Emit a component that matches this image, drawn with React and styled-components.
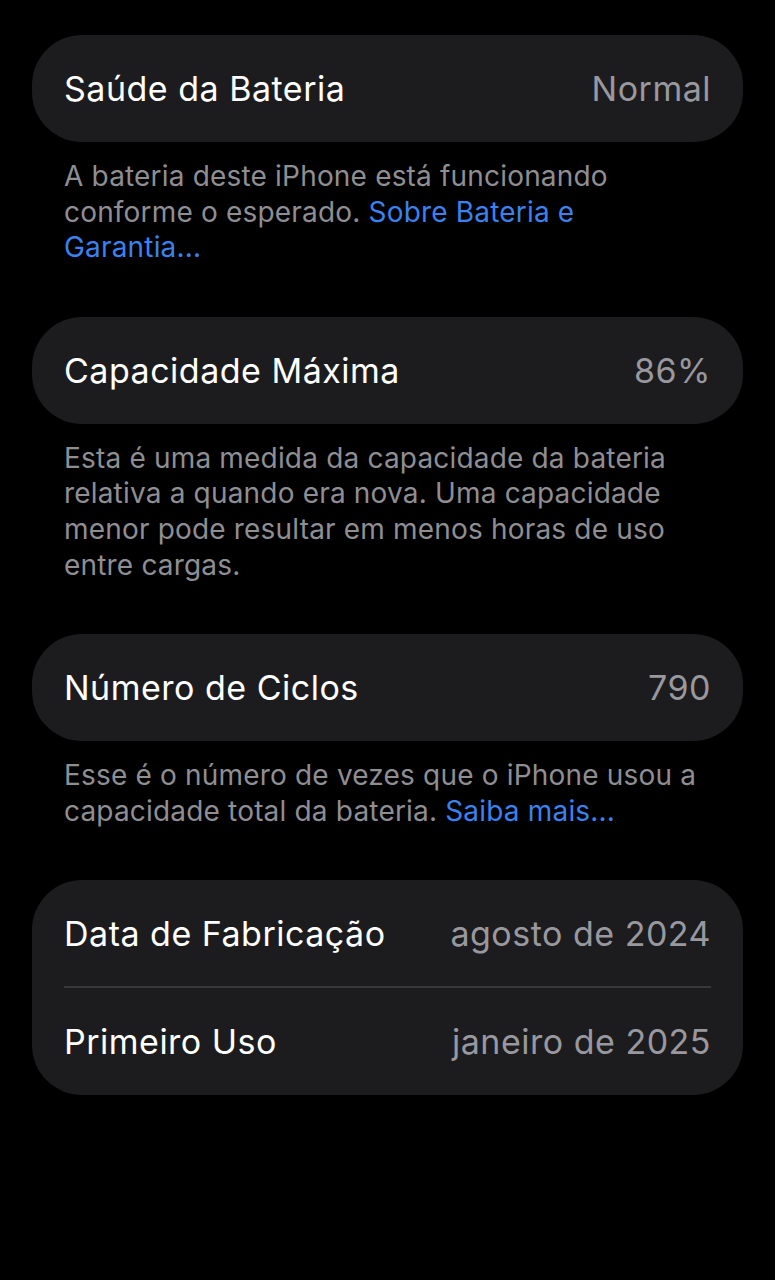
import React from "react";
import styled, { createGlobalStyle } from "styled-components";

const Global = createGlobalStyle`
  html, body { margin: 0; padding: 0; background: #000; }
  body { font-family: Inter, "Noto Sans", "Liberation Sans", sans-serif; -webkit-font-smoothing: antialiased; }
`;

const Page = styled.div`
  background: #000;
  min-height: 1280px;
  padding: 35px 32px 0 32px;
  box-sizing: border-box;
  display: flex;
  flex-direction: column;
`;

const Section = styled.section`
  display: flex;
  flex-direction: column;
  margin-bottom: 51px;
`;

const Card = styled.div`
  background: #1c1c1e;
  border-radius: 50px;
  display: flex;
  flex-direction: column;
  padding: 0 32px;
`;

const Row = styled.div`
  height: 107px;
  display: flex;
  align-items: center;
  justify-content: space-between;
  box-sizing: border-box;
  ${(p) => (p.$divider ? "border-bottom: 2px solid #38383a; height: 108px;" : "")}
`;

const Label = styled.span`
  color: #fff;
  font-size: 34px;
  letter-spacing: 0.5px;
`;

const Value = styled.span`
  color: #98989e;
  font-size: 34px;
  letter-spacing: 0.5px;
`;

const Footer = styled.p`
  margin: 0;
  padding: 17px 32px 0 32px;
  color: #8e8e93;
  font-size: 28px;
  line-height: 35.6px;
  letter-spacing: 0.18px;
`;

const Link = styled.span`
  color: #3b82f0;
`;

export default function App() {
  return (
    <>
      <Global />
      <Page>
        <Section>
          <Card>
            <Row>
              <Label>Saúde da Bateria</Label>
              <Value>Normal</Value>
            </Row>
          </Card>
          <Footer>
            A bateria deste iPhone está funcionando conforme o esperado.{" "}
            <Link>Sobre Bateria e Garantia...</Link>
          </Footer>
        </Section>
        <Section>
          <Card>
            <Row>
              <Label>Capacidade Máxima</Label>
              <Value>86%</Value>
            </Row>
          </Card>
          <Footer>
            Esta é uma medida da capacidade da bateria relativa a quando era nova. Uma capacidade
            menor pode resultar em menos horas de uso entre cargas.
          </Footer>
        </Section>
        <Section>
          <Card>
            <Row>
              <Label>Número de Ciclos</Label>
              <Value>790</Value>
            </Row>
          </Card>
          <Footer>
            Esse é o número de vezes que o iPhone usou a capacidade total da bateria.{" "}
            <Link>Saiba mais...</Link>
          </Footer>
        </Section>
        <Section>
          <Card>
            <Row $divider>
              <Label>Data de Fabricação</Label>
              <Value>agosto de 2024</Value>
            </Row>
            <Row>
              <Label>Primeiro Uso</Label>
              <Value>janeiro de 2025</Value>
            </Row>
          </Card>
        </Section>
      </Page>
    </>
  );
}
